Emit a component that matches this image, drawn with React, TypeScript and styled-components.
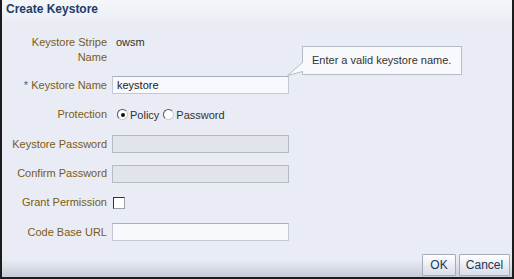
import React from "react";
import styled, { createGlobalStyle } from "styled-components";

const GlobalStyle = createGlobalStyle`
    html, body {
        margin: 0;
        padding: 0;
        background: #ffffff;
    }
`;

export default function App() {
    return (
        <>
            <GlobalStyle />
            <Dialog>
                <Header>Create Keystore</Header>
                <Body>
                    <Form>
                        <Label>
                            Keystore Stripe
                            <br />
                            Name
                        </Label>
                        <Value>owsm</Value>

                        <Label>
                            <Required>*</Required> Keystore Name
                        </Label>
                        <FieldCell>
                            <TextField defaultValue="keystore" />
                            <Tooltip>
                                <Tail width="16" height="15" viewBox="0 0 16 15">
                                    <polygon points="15.5,0.5 0.5,13.5 15.5,9.5" fill="#f8f9fc" stroke="#b4bcc8" strokeWidth="1" />
                                    <line x1="15.5" y1="1" x2="15.5" y2="9" stroke="#f8f9fc" strokeWidth="1.2" />
                                </Tail>
                                Enter a valid keystore name.
                            </Tooltip>
                        </FieldCell>

                        <Label>Protection</Label>
                        <Options>
                            <Option>
                                <Radio $checked />
                                Policy
                            </Option>
                            <Option>
                                <Radio />
                                Password
                            </Option>
                        </Options>

                        <Label>Keystore Password</Label>
                        <TextField disabled />

                        <Label>Confirm Password</Label>
                        <TextField disabled />

                        <Label>Grant Permission</Label>
                        <Checkbox />

                        <Label>Code Base URL</Label>
                        <TextField />
                    </Form>
                </Body>
                <Footer>
                    <Button $width={34}>OK</Button>
                    <Button $width={51}>Cancel</Button>
                </Footer>
            </Dialog>
        </>
    );
}

const Dialog = styled.div`
    box-sizing: border-box;
    width: 514px;
    height: 279px;
    display: flex;
    flex-direction: column;
    background: #e9ecf4;
    border-left: 2px solid #1c1c1c;
    border-right: 2px solid #1c1c1c;
    border-bottom: 2px solid #1c1c1c;
    font-family: "Liberation Sans", Arial, sans-serif;
    font-size: 11px;
    overflow: hidden;
`;

const Header = styled.div`
    height: 21px;
    padding-left: 4px;
    line-height: 19px;
    font-size: 12px;
    font-weight: 700;
    color: #1d3c68;
    background: linear-gradient(#f4f6f9, #eceff5);
`;

const Body = styled.div`
    flex: 1;
    position: relative;
`;

const Form = styled.div`
    display: grid;
    grid-template-columns: 105px 177px;
    grid-auto-rows: minmax(18px, auto);
    column-gap: 5px;
    row-gap: 11.4px;
    align-items: center;
    padding-top: 14px;
`;

const Label = styled.div`
    text-align: right;
    line-height: 15px;
    color: #7a5b14;
    white-space: nowrap;
`;

const Required = styled.span`
    color: #3a5f9a;
`;

const Value = styled.div`
    align-self: start;
    padding-left: 4px;
    line-height: 15px;
    color: #333333;
`;

const FieldCell = styled.div`
    position: relative;
`;

const TextField = styled.input`
    box-sizing: border-box;
    display: block;
    width: 177px;
    height: 18px;
    margin: 0;
    padding: 0 4px;
    border: 1px solid #c3c9d3;
    border-top-color: #a9b0bb;
    background: #f7f9fc;
    font-family: "Liberation Sans", Arial, sans-serif;
    font-size: 11px;
    color: #222222;
    outline: none;

    &:disabled {
        background: #e1e4ea;
        border-color: #b6bbc3;
    }
`;

const Tooltip = styled.div`
    position: absolute;
    left: 190px;
    top: -30px;
    box-sizing: border-box;
    width: 160px;
    height: 29px;
    padding-left: 9px;
    line-height: 27px;
    color: #333333;
    background: #f8f9fc;
    border: 1px solid #b4bcc8;
    white-space: nowrap;
`;

const Tail = styled.svg`
    position: absolute;
    left: -16px;
    top: 15px;
    overflow: visible;
`;

const Options = styled.div`
    display: flex;
    align-items: center;
    gap: 4px;
    padding-left: 5px;
    color: #333333;
`;

const Option = styled.label`
    display: flex;
    align-items: center;
    gap: 2px;
`;

const Radio = styled.span<{ $checked?: boolean }>`
    position: relative;
    box-sizing: border-box;
    width: 11px;
    height: 11px;
    border-radius: 50%;
    border: 1px solid #555555;
    border-right-color: #c8ccd4;
    border-bottom-color: #c8ccd4;
    background: #ffffff;

    &::after {
        content: "";
        display: ${(p) => (p.$checked ? "block" : "none")};
        position: absolute;
        left: 2.5px;
        top: 2.5px;
        width: 4px;
        height: 4px;
        border-radius: 50%;
        background: #111111;
    }
`;

const Checkbox = styled.span`
    box-sizing: border-box;
    width: 12px;
    height: 12px;
    margin-left: 1px;
    border: 1px solid #333333;
    border-right-color: #9aa0a8;
    border-bottom-color: #9aa0a8;
    background: #ffffff;
`;

const Footer = styled.div`
    display: flex;
    justify-content: flex-end;
    align-items: flex-end;
    gap: 3px;
    height: 24px;
    padding: 0 2px 1px 0;
    background: linear-gradient(#e9ecf4 0%, #e9ecf4 30%, #c6ccd8 100%);
`;

const Button = styled.button<{ $width: number }>`
    box-sizing: border-box;
    width: ${(p) => p.$width}px;
    height: 22px;
    margin: 0;
    padding: 0;
    border: 1px solid #a3abb8;
    border-radius: 1px;
    background: linear-gradient(#ffffff, #e7ebf1 55%, #d9dee7);
    font-family: "Liberation Sans", Arial, sans-serif;
    font-size: 12px;
    color: #1e3552;
`;
